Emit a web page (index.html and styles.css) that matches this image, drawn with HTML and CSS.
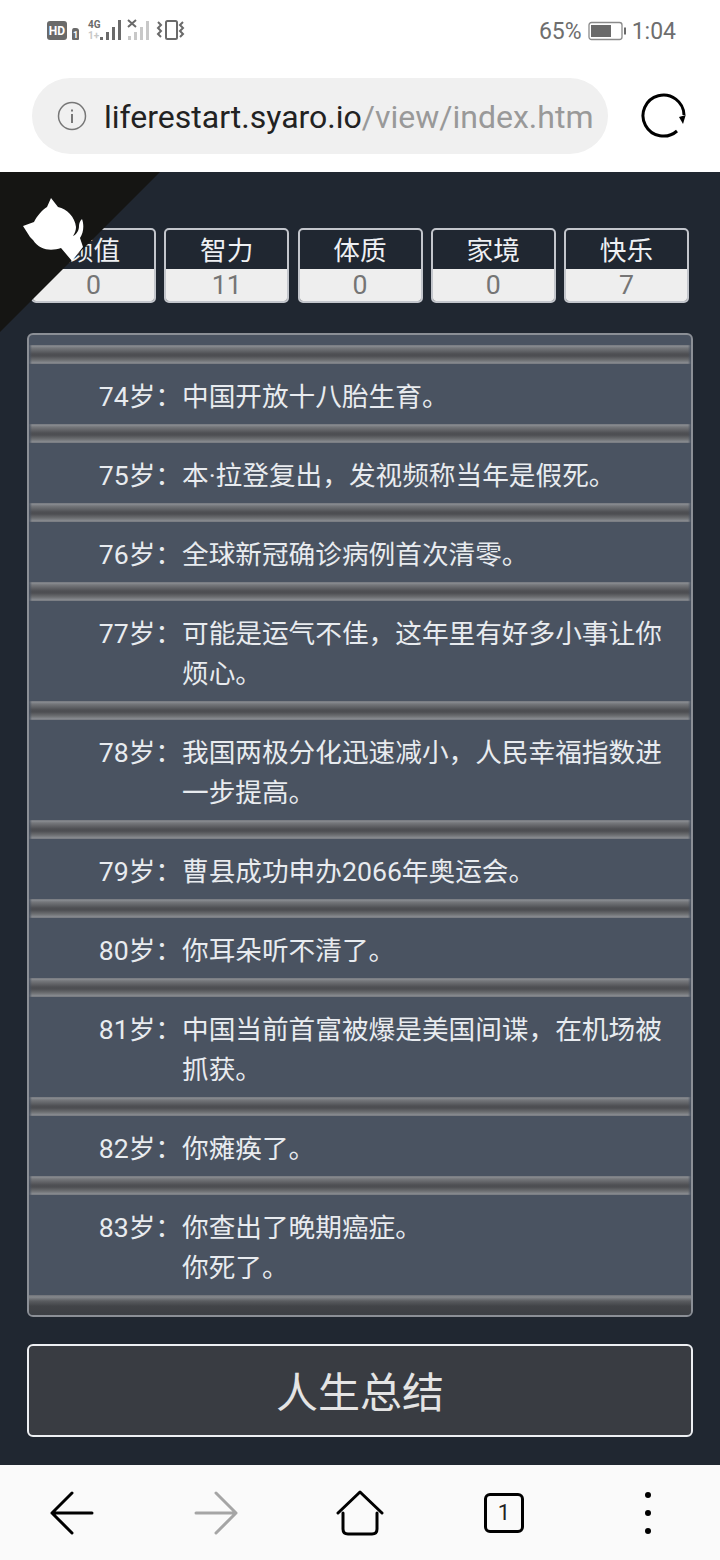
FILE: index.html
```html
<!DOCTYPE html>
<html lang="zh-cn">

<head>
  <meta charset="UTF-8">
  <title>人生重开模拟器</title>
  <link rel="stylesheet" href="styles.css">
</head>

<body>
  <div class="status">
    <div class="status-left">
      <svg width="140" height="24" viewBox="0 0 140 24">
        <rect x="0" y="2" width="20" height="19" rx="3" fill="#6a6a6a"/>
        <text x="10" y="16" class="hd">HD</text>
        <path d="M25 20v-8q0-3 2-3h2q3 0 3 3v8q0 1-1 1h-5q-1 0-1-1z" fill="#6a6a6a"/>
        <text x="28.500" y="19" class="sim">1</text>
        <text x="41" y="9" class="net">4G</text>
        <text x="41" y="20" class="net light">1+</text>
        <g fill="#6a6a6a">
          <rect x="53" y="18" width="3" height="3"/>
          <rect x="59" y="13" width="3" height="8"/>
          <rect x="65" y="8" width="3" height="13"/>
          <rect x="71" y="1" width="3" height="20"/>
        </g>
        <path d="M81 1l8 7M89 1l-8 7" stroke="#6a6a6a" stroke-width="2"/>
        <g fill="#c8c8c8">
          <rect x="81" y="17" width="3" height="4"/>
          <rect x="87" y="13" width="3" height="8"/>
          <rect x="93" y="8" width="3" height="13"/>
          <rect x="99" y="2" width="3" height="19"/>
        </g>
        <rect x="119" y="2" width="11" height="18" rx="1.500" fill="none" stroke="#6a6a6a" stroke-width="2"/>
        <path d="M111 3l3 3-3 3 3 3-3 3 3 3M136 3l-3 3 3 3-3 3 3 3-3 3" fill="none" stroke="#6a6a6a" stroke-width="2"/>
      </svg>
    </div>
    <div class="status-right">
      <span>65%</span>
      <svg class="battery" width="38" height="20" viewBox="0 0 38 20">
        <rect x="1" y="1.500" width="33" height="17" rx="2.500" fill="none" stroke="#8a8a8a" stroke-width="1.300"/>
        <rect x="3" y="4" width="20" height="12" fill="#6a6a6a"/>
        <rect x="36" y="6.500" width="2" height="7" fill="#6a6a6a"/>
      </svg>
      <span>1:04</span>
    </div>
  </div>

  <div class="urlbar">
    <div class="url">
      <svg class="info" width="30" height="30" viewBox="0 0 30 30">
        <circle cx="15" cy="15" r="13.500" fill="none" stroke="#777" stroke-width="1.500"/>
        <rect x="14" y="13" width="2" height="9" fill="#777"/>
        <rect x="14" y="8.500" width="2" height="2" fill="#777"/>
      </svg>
      <div class="url-text">liferestart.syaro.io<span>/view/index.htm</span></div>
    </div>
    <svg class="reload" width="46" height="46" viewBox="0 0 46 46">
      <path d="M36 38A20.500 20.500 0 1 1 43 22" fill="none" stroke="#000" stroke-width="3"/>
      <path d="M38 24l6.700-2-2.700 9z" fill="#000"/>
    </svg>
  </div>

  <div class="main">
    <svg class="corner" width="160" height="160" viewBox="0 0 160 160">
      <path d="M0 0H160L0 160z" fill="#151513"/>
      <path d="M51 26L58 35C67 37 75 45 76 55 76 58 75 61 73 64 77 62 79 58 79 54 79 51 80 49 82 47 84 52 84 60 80 66L83 75 72 89 61 76C52 79 40 79 33 68L30 65 23 54 34 50C37 44 42 38 47 35z" fill="#fff"/>
    </svg>

    <div class="stats">
      <div class="stat"><div class="stat-name">颜值</div><div class="stat-val">0</div></div>
      <div class="stat"><div class="stat-name">智力</div><div class="stat-val">11</div></div>
      <div class="stat"><div class="stat-name">体质</div><div class="stat-val">0</div></div>
      <div class="stat"><div class="stat-name">家境</div><div class="stat-val">0</div></div>
      <div class="stat"><div class="stat-name">快乐</div><div class="stat-val">7</div></div>
    </div>

    <div class="list">
      <div class="sep"></div>
      <div class="row"><div class="age">74岁：</div><div class="txt">中国开放十八胎生育。</div></div>
      <div class="sep"></div>
      <div class="row"><div class="age">75岁：</div><div class="txt">本·拉登复出，发视频称当年是假死。</div></div>
      <div class="sep"></div>
      <div class="row"><div class="age">76岁：</div><div class="txt">全球新冠确诊病例首次清零。</div></div>
      <div class="sep"></div>
      <div class="row"><div class="age">77岁：</div><div class="txt">可能是运气不佳，这年里有好多小事让你烦心。</div></div>
      <div class="sep"></div>
      <div class="row"><div class="age">78岁：</div><div class="txt">我国两极分化迅速减小，人民幸福指数进一步提高。</div></div>
      <div class="sep"></div>
      <div class="row"><div class="age">79岁：</div><div class="txt">曹县成功申办2066年奥运会。</div></div>
      <div class="sep"></div>
      <div class="row"><div class="age">80岁：</div><div class="txt">你耳朵听不清了。</div></div>
      <div class="sep"></div>
      <div class="row"><div class="age">81岁：</div><div class="txt">中国当前首富被爆是美国间谍，在机场被抓获。</div></div>
      <div class="sep"></div>
      <div class="row"><div class="age">82岁：</div><div class="txt">你瘫痪了。</div></div>
      <div class="sep"></div>
      <div class="row"><div class="age">83岁：</div><div class="txt">你查出了晚期癌症。<br>你死了。</div></div>
      <div class="sep"></div>
    </div>

    <button class="summary">人生总结</button>
  </div>

  <div class="nav">
    <svg width="44" height="44" viewBox="0 0 44 44">
      <path d="M42 22H2M22 2L2 22l20 20" fill="none" stroke="#000" stroke-width="3" stroke-linecap="round" stroke-linejoin="round"/>
    </svg>
    <svg width="44" height="44" viewBox="0 0 44 44">
      <path d="M2 22h40M22 2l20 20-20 20" fill="none" stroke="#a5a5a5" stroke-width="3" stroke-linecap="round" stroke-linejoin="round"/>
    </svg>
    <svg width="48" height="46" viewBox="0 0 48 46">
      <path d="M2 23L24 2l22 21M7 23v16q0 5 5 5h24q5 0 5-5V23" fill="none" stroke="#000" stroke-width="3" stroke-linecap="round" stroke-linejoin="round"/>
    </svg>
    <div class="tabs">1</div>
    <svg width="12" height="44" viewBox="0 0 12 44">
      <circle cx="6" cy="4" r="3" fill="#000"/>
      <circle cx="6" cy="22" r="3" fill="#000"/>
      <circle cx="6" cy="40" r="3" fill="#000"/>
    </svg>
  </div>
</body>
</html>
```

FILE: styles.css
```css
*{
	box-sizing:border-box;
}
html,body{
	margin:0;
	padding:0;
}
body{
	width:720px;
	height:1560px;
	overflow:hidden;
	background:#fff;
	font-family:Roboto,"Noto Sans CJK SC",sans-serif;
}

/* status bar */
.status{
	height:62px;
	padding:0 44px 0 47px;
	display:flex;
	justify-content:space-between;
	align-items:center;
	color:#6e6e6e;
	font-size:23px;
}
.status-left svg{
	display:block;
}
.status-right{
	display:flex;
	align-items:center;
	gap:6px;
}
.hd{
	font:bold 12px Roboto,sans-serif;
	fill:#fff;
	text-anchor:middle;
}
.sim{
	font:bold 9px Roboto,sans-serif;
	fill:#fff;
	text-anchor:middle;
}
.net{
	font:bold 10px Roboto,sans-serif;
	fill:#6a6a6a;
}
.net.light{
	fill:#c8c8c8;
}

/* url bar */
.urlbar{
	height:110px;
	padding:16px 0 18px 32px;
	display:flex;
	align-items:center;
}
.url{
	width:576px;
	height:76px;
	border-radius:38px;
	background:#f0f0f0;
	padding:0 14px 0 25px;
	display:flex;
	align-items:center;
}
.info{
	flex:none;
	margin-right:17px;
}
.url-text{
	padding-top:2px;
	font-size:32px;
	color:#222;
	white-space:nowrap;
}
.url-text span{
	color:#999;
}
.reload{
	margin-left:33px;
}

/* page */
.main{
	position:relative;
	height:1293px;
	background:#202731;
	padding:56px 27px 0;
}
.corner{
	position:absolute;
	left:0;
	top:0;
}
.stats{
	display:flex;
	justify-content:space-between;
	padding:0 4px;
}
.stat{
	width:125px;
	height:75px;
	border:2px solid #c3c6cc;
	border-radius:5px;
	overflow:hidden;
}
.stat-name{
	height:39px;
	padding-top:2px;
	line-height:39px;
	text-align:center;
	font-size:26.670px;
	color:#eef0f3;
}
.stat-val{
	height:32px;
	line-height:32px;
	text-align:center;
	font-size:26.670px;
	background:#eeeeee;
	color:#757575;
}

/* event list */
.list{
	margin-top:30px;
	height:984px;
	border:2px solid #8b8f96;
	border-radius:6px;
	background:#4a5361;
	padding-top:10px;
	overflow:hidden;
}
.sep{
	height:19px;
	background:linear-gradient(90deg,#4a5361,rgba(74,83,97,0) 3px,rgba(74,83,97,0) calc(100% - 3px),#4a5361),
		linear-gradient(#6e7178 0,#8a8d92 1px,#75777b 3px,#4e4f53 9px,#4d4e52 11px,#6c6e71 15px,#8a8d92 18px,#6e7178 19px);
}
.list .sep:last-child{
	height:20px;
	background:linear-gradient(#6e7178 0,#85888d 2px,#5a5c60 6px,#424448 11px,#3c3f44 20px);
}
.row{
	display:flex;
	padding:13px 15px 7px 0;
	font-size:26.670px;
	line-height:40px;
	color:#e8ebef;
}
.age{
	flex:none;
	width:153px;
	text-align:right;
}
.txt{
	flex:1;
}

/* summary button */
.summary{
	display:block;
	width:666px;
	height:93px;
	margin-top:27px;
	padding:0 0 2px;
	border:2px solid #eef0f3;
	border-radius:6px;
	background:#393c42;
	color:#e4e4e4;
	font-family:inherit;
	font-size:42px;
}

/* browser bottom bar */
.nav{
	height:95px;
	background:#fafafa;
	display:grid;
	grid-template-columns:repeat(5,144px);
	justify-items:center;
	align-items:center;
}
.tabs{
	width:40px;
	height:40px;
	border:3px solid #000;
	border-radius:6px;
	text-align:center;
	line-height:34px;
	font-size:22px;
	color:#222;
}
```
